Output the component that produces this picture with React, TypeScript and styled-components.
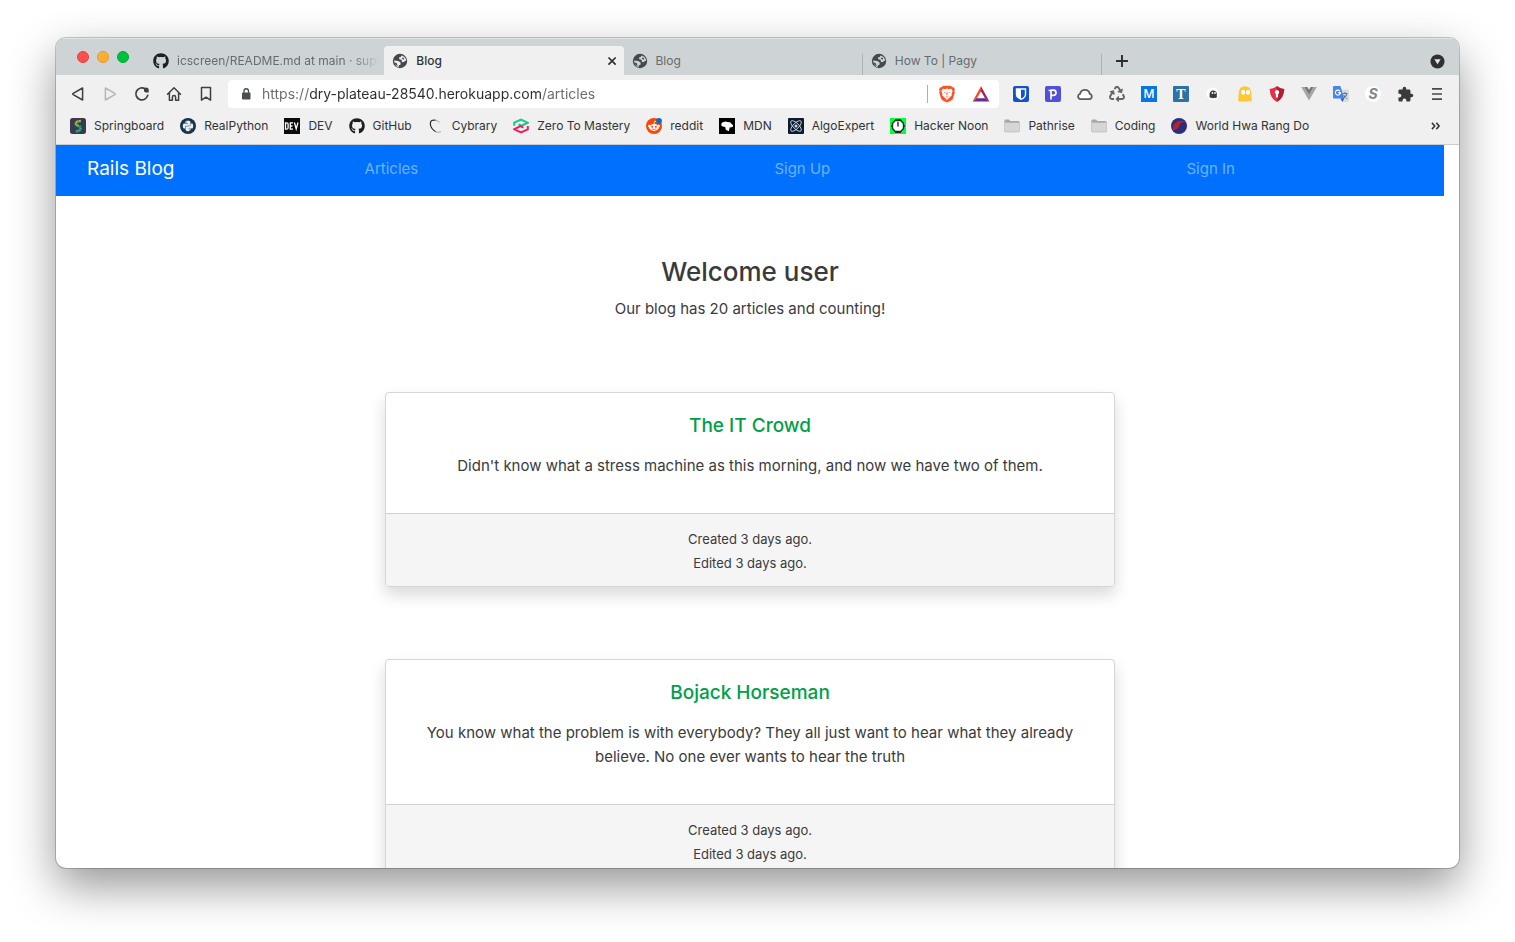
import React from 'react';
import styled, { createGlobalStyle, css } from 'styled-components';
import { FaGithub, FaPython, FaRecycle } from 'react-icons/fa';
import { MdExtension } from 'react-icons/md';

const GlobalStyle = createGlobalStyle`
  *, *::before, *::after { box-sizing: border-box; }
  body {
    margin: 0;
    background: #fff;
    color: #3a3a3c;
    font-family: Inter, Roboto, sans-serif;
    font-size: 15px;
    line-height: 24px;
  }
  button { border: 0; padding: 0; background: none; font: inherit; color: inherit; cursor: pointer; }
  a { color: inherit; text-decoration: none; }
  svg { display: block; flex: none; }
`;

const Desktop = styled.div`
  height: 100vh;
  padding: 38px 56px 74px;
  overflow: hidden;
`;

const BrowserWindow = styled.div`
  display: flex;
  flex-direction: column;
  height: 100%;
  overflow: hidden;
  background: #fff;
  border-radius: 10px;
  box-shadow: 0 0 0 1px rgba(0, 0, 0, 0.2), 0 18px 46px rgba(0, 0, 0, 0.42);
`;

/* ---- tab strip ---- */

const TabStrip = styled.div`
  display: flex;
  flex: none;
  height: 37px;
  padding: 8px 14px 0 21px;
  background: #ced4d6;
  box-shadow: inset 0 1px #e0e4e5;
`;

const TrafficLights = styled.div`
  display: flex;
  gap: 8px;
  width: 68px;
  padding-top: 5px;
`;

const Light = styled.button<{ $color: string; $edge: string }>`
  width: 12px;
  height: 12px;
  border: 1px solid ${(p) => p.$edge};
  border-radius: 50%;
  background: ${(p) => p.$color};
`;

const Tabs = styled.div`
  display: flex;
  flex: 0 1 957px;
  min-width: 0;
`;

const Tab = styled.div<{ $active?: boolean; $divider?: boolean }>`
  display: flex;
  align-items: center;
  flex: 1 1 0;
  min-width: 0;
  padding: 1px 4px 0 8px;
  border-right: 1px solid transparent;
  color: #666b6e;
  font-size: 12px;
  ${(p) => p.$active && css`
    border-radius: 4px 4px 0 0;
    background: #f0f0f0;
    color: #303335;
    font-weight: 500;
  `}
  ${(p) => p.$divider && css`
    border-image: linear-gradient(transparent 8px, #aeb4b6 8px) 1;
  `}
`;

const TabButton = styled.button<{ $fade?: boolean }>`
  display: flex;
  align-items: center;
  gap: 8px;
  flex: 1;
  min-width: 0;
  white-space: nowrap;
  ${(p) => p.$fade && css`
    mask-image: linear-gradient(to left, transparent 0, #000 28px);
  `}
`;

const StripButton = styled.button`
  display: flex;
  align-items: center;
  padding-top: 1px;
  &:last-child { margin-left: auto; }
`;

const NewTab = styled(StripButton)`
  padding-left: 13px;
`;

/* ---- toolbar ---- */

const Toolbar = styled.div`
  display: flex;
  flex: none;
  align-items: center;
  padding: 5px 6px 0;
  background: #f0f0f0;
`;

const IconButton = styled.button<{ $dim?: boolean }>`
  display: flex;
  align-items: center;
  justify-content: center;
  flex: none;
  width: 32px;
  height: 28px;
  color: ${(p) => (p.$dim ? '#b6b6b6' : '#3d3f41')};
`;

const AddressBar = styled.div`
  display: flex;
  align-items: center;
  flex: 1;
  min-width: 0;
  height: 28px;
  margin: 0 6px;
  padding: 0 9px 0 12px;
  border-radius: 4px;
  background: #fff;
`;

const AddressInput = styled.input`
  flex: 1;
  min-width: 0;
  margin-left: 10px;
  padding: 0;
  border: 0;
  outline: 0;
  color: #303335;
  font: 14px/24px Inter, Roboto, sans-serif;
  background: linear-gradient(to right, #66696b 47px, #2b2d2f 47px, #2b2d2f 280px, #66696b 280px);
  background-clip: text;
  -webkit-background-clip: text;
  -webkit-text-fill-color: transparent;
`;

const Shields = styled.div`
  display: flex;
  align-items: center;
  gap: 16px;
  padding-left: 10px;
  border-left: 1px solid #b0b0b0;
  button { display: flex; }
`;

/* ---- bookmarks ---- */

const Bookmarks = styled.nav`
  display: flex;
  flex: none;
  align-items: center;
  gap: 16px;
  height: 37px;
  padding: 0 18px 0 14px;
  border-bottom: 1px solid #c9cccd;
  background: #f0f0f0;
  color: #303335;
  font-size: 12px;
  white-space: nowrap;
`;

const Bookmark = styled.a`
  display: flex;
  align-items: center;
  gap: 8px;
`;

const MoreBookmarks = styled.button`
  margin-left: auto;
`;

/* ---- page ---- */

const Page = styled.div`
  flex: 1;
  min-height: 0;
  padding-right: 15px;
  overflow: hidden;
`;

const SiteNav = styled.nav`
  display: flex;
  height: 51px;
  padding: 3px 31px 7px;
  align-items: center;
  background: #0071ff;
`;

const Brand = styled.a`
  margin-right: 12px;
  color: #fff;
  font-size: 19px;
`;

const NavLinks = styled.div`
  display: flex;
  flex: 1;
`;

const NavLink = styled.a`
  flex: 1 1 auto;
  text-align: center;
  color: #6db1ff;
`;

const Hero = styled.header`
  padding: 59px 0 71px;
  text-align: center;
`;

const Welcome = styled.h1`
  margin: 0 0 8px;
  font-size: 26px;
  font-weight: 500;
  line-height: 34px;
`;

const Intro = styled.p`
  margin: 0;
`;

const ArticleList = styled.main`
  display: flex;
  flex-direction: column;
  gap: 72px;
  max-width: 730px;
  margin: 0 auto;
`;

const Card = styled.article`
  border: 1px solid #d6d6d6;
  border-radius: 4px;
  box-shadow: 0 8px 16px rgba(0, 0, 0, 0.15);
  background: #fff;
  text-align: center;
`;

const CardBody = styled.div`
  padding: 21px 20px 35px;
`;

const CardTitle = styled.h2`
  margin: 0 0 16px;
  color: #00a046;
  font-size: 19px;
  font-weight: 500;
  line-height: 24px;
`;

const CardText = styled.p`
  margin: 0;
`;

const CardFooter = styled.footer`
  padding: 13px 20px 11px;
  border-top: 1px solid #d0d0d0;
  border-radius: 0 0 3px 3px;
  background: #f5f5f5;
  font-size: 13px;
`;

/* ---- icons ---- */

const Glyph = ({ size = 16, children }: { size?: number; children: React.ReactNode }) => (
  <svg width={size} height={size} viewBox="0 0 16 16" fill="none" aria-hidden="true">{children}</svg>
);

const line = { stroke: 'currentColor', strokeWidth: 1.5, strokeLinejoin: 'round' as const, strokeLinecap: 'round' as const };

const GlobeIcon = ({ land }: { land: string }) => (
  <Glyph>
    <circle cx="8" cy="8" r="7.200" fill="#45494c" />
    <path d="M9.600 2.400q3.900.9 4.600 5.200l-1.900.9q-1.100 1.200-2.500.3L9.600 6.700 7.300 6.200 7 4.600l1.700-.6z" fill={land} />
    <path d="M2 7.600l4.300.3 2.300 1.700v1.900l-1.900 1.100-.3 1.800Q3 13.500 2 7.600z" fill={land} />
    <path d="M2.300 9.200l2.500 1 .9 2.700Q3 12.300 2.300 9.200zM10.600 4.200l1.700 1.400-.8 1.200-1.500-1z" fill="#45494c" />
  </Glyph>
);

const BackIcon = () => <Glyph><path d="M12.600 2v12L3.200 8.600q-.8-.6 0-1.200z" {...line} /></Glyph>;
const ForwardIcon = () => <Glyph><path d="M3.400 2v12l9.400-5.400q.8-.6 0-1.200z" {...line} /></Glyph>;
const ReloadIcon = () => (
  <Glyph>
    <path d="M13.700 9.400A6 6 0 1 1 11.400 3" {...line} strokeWidth={1.7} />
    <path d="M10.200 5.200a2.400 2.400 0 0 1 2-3.600q2.300.1 2.500 1.800v3.200h-3.200z" fill="currentColor" />
  </Glyph>
);
const HomeIcon = () => (
  <Glyph><path d="M1.500 8.200 8 1.800l6.500 6.400M3.400 6.800v7.400h3v-3a1.600 1.600 0 0 1 3.200 0v3h3V6.800" {...line} /></Glyph>
);
const BookmarkIcon = () => <Glyph><path d="M3.500 1.600h9v12.600L8 11.200l-4.500 3z" {...line} /></Glyph>;

const LockIcon = () => (
  <svg width="12" height="14" viewBox="0 0 12 14" fill="none" aria-hidden="true">
    <rect x="2" y="5.500" width="8.500" height="7" rx="1" fill="#4a4d50" />
    <path d="M4 6V4a2.250 2.250 0 0 1 4.500 0v2" stroke="#4a4d50" strokeWidth="1.300" />
  </svg>
);

const BraveIcon = () => (
  <Glyph size={18}>
    <path d="M4.700.6h6.600l1.500 1.500 1.100-.2 1.200 1.900-.6 1.500.4 1.600-1.800 5.700Q11.600 14 8 15.600 4.400 14 2.900 12.600L1.100 6.900l.4-1.600-.6-1.500 1.200-1.900 1.100.2z" fill="#fb542b" />
    <path d="m4.200 3.300 2.300.4L8 3.100l1.500.6 2.300-.4 1.200 2-1 2.700.4 1.200-2 1.700L8 13.400l-2.400-2.500-2-1.700L4 8 3 5.300z" fill="#fff" />
    <path d="m4.800 6 1.800.4-.4.800zM11.200 6l-1.800.4.400.800zM7.500 6.500h1L8.400 9h-.8zM6.400 9.800l1.600.7 1.600-.7L8 11.400z" fill="#fb542b" />
  </Glyph>
);

const BatIcon = () => (
  <Glyph size={18}>
    <path d="M8 1v4.600L4.400 11.800.5 14.600z" fill="#ff4724" />
    <path d="M8 1v4.600l3.600 6.200 3.900 2.800z" fill="#9e1f63" />
    <path d="M.5 14.600l3.900-2.800h7.200l3.900 2.800z" fill="#662d91" />
  </Glyph>
);

const MarkdownIcon = () => (
  <Glyph>
    <rect width="16" height="16" fill="#0b74e5" />
    <text x="8" y="12" textAnchor="middle" fontFamily="Inter" fontSize="12" fontWeight="500" fill="#fff">M</text>
  </Glyph>
);

const SerifTIcon = () => (
  <Glyph>
    <rect width="16" height="16" rx="1" fill="#2a72a8" />
    <text x="8" y="13" textAnchor="middle" fontFamily="Liberation Serif" fontSize="14" fontWeight="700" fill="#fff">T</text>
  </Glyph>
);

const BitwardenIcon = () => (
  <Glyph>
    <rect width="16" height="16" rx="2" fill="#1252d0" />
    <path d="M2.800 2.200h10.400v6.300q0 3.300-5.200 5.600-5.200-2.300-5.200-5.600z" fill="#fff" />
    <path d="M8 3.700h3.800v4.700Q11.800 10.800 8 12.500z" fill="#1252d0" />
  </Glyph>
);

const PIcon = () => (
  <Glyph>
    <rect width="16" height="16" rx="2" fill="#5050dc" />
    <path d="M6 13.500V3.400M3.600 4.500H6M6 4.200h2.400a2.600 2.600 0 0 1 0 5.200H6.500" stroke="#fff" strokeWidth="1.700" />
  </Glyph>
);

const CloudIcon = () => (
  <Glyph>
    <path d="M3.600 13.100a2.700 2.700 0 0 1-.5-5.300A4.900 4.900 0 0 1 12.700 7.800a2.700 2.700 0 0 1-.3 5.300z" fill="#fff" stroke="#5d5d5d" strokeWidth="1.800" />
  </Glyph>
);

const GhostDarkIcon = () => (
  <Glyph>
    <circle cx="8" cy="8" r="6.500" fill="#fff" />
    <path d="M4.600 7.600a3.700 3.700 0 0 1 7.200-.6v4.400l-1.200.7-1.400-.4-1.300.6-1.500-.5-1.800-.2z" fill="#3c3c3c" />
    <circle cx="7.400" cy="7" r=".9" fill="#fff" /><circle cx="10" cy="7" r=".9" fill="#fff" />
  </Glyph>
);

const GhosteryIcon = () => (
  <Glyph>
    <path d="M1.800 6.600Q2.300.2 8 .2t6.200 6.400l.6 7.800q-1.300 1.500-2.900.4-1.900 1.400-3.800.2-2 1.500-3.900.2-1.800 1.100-3.100-.6z" fill="#ffc736" />
    <ellipse cx="6.200" cy="6.300" rx="2" ry="2.500" fill="#fff" /><ellipse cx="11" cy="6.300" rx="2" ry="2.500" fill="#fff" />
  </Glyph>
);

const RedShieldIcon = () => (
  <Glyph>
    <path d="M8 0v16Q1 12.300.6 3 5 2.600 8 0z" fill="#e5304a" />
    <path d="M8 0v16q7-3.700 7.400-13Q11 2.600 8 0z" fill="#b01f30" />
    <path d="M8 4a2.200 2.200 0 0 1 1.100 4.100v3.500H6.900V8.100A2.200 2.200 0 0 1 8 4z" fill="#fff" />
  </Glyph>
);

const VueIcon = () => (
  <Glyph>
    <path d="M.2 1h3.200L8 9l4.600-8h3.200L8 14.600z" fill="#a6a6a6" />
    <path d="M3.400 1h3L8 3.800 9.600 1h3L8 9z" fill="#777" />
  </Glyph>
);

const TranslateIcon = () => (
  <Glyph>
    <path d="M6 3.500h9q1 0 1 1V15q0 1-1 1H9z" fill="#d9dcdf" />
    <path d="M9.500 7.500h5M12 6v1.500m2 0q-1 3.500-4 5M10.500 9q1.500 2.600 3.800 3.500" stroke="#607988" strokeWidth="1.100" />
    <path d="M1 0h6.400l3.800 12.600H1q-1 0-1-1V1Q0 0 1 0z" fill="#4285f4" />
    <path d="M7.500 12.600h3.700L9.400 16z" fill="#3848b8" />
    <path d="M6.900 5.100A2.500 2.500 0 1 0 7.400 6.600H5.200" stroke="#fff" strokeWidth="1.200" />
  </Glyph>
);

const StylusIcon = () => (
  <Glyph>
    <circle cx="8" cy="8" r="8" fill="#fff" />
    <text x="8" y="13" textAnchor="middle" fontFamily="Inter" fontStyle="italic" fontSize="14" fontWeight="700" fill="#858585">S</text>
  </Glyph>
);

const MenuIcon = () => <Glyph><path d="M3 2.900h10M3 8h10M3 13.100h10" stroke="#4a4a4a" strokeWidth="1.600" /></Glyph>;

const SpringboardIcon = () => (
  <Glyph>
    <rect width="16" height="16" rx="2.500" fill="#3b3a4c" />
    <path d="M10.800 3Q5.600 3.200 5.900 6q.6 1.600 3 2" stroke="#a6c23a" strokeWidth="2.400" strokeDasharray="1.500 .4" />
    <path d="M7.400 7.800q3.400.3 3 3-.5 2.300-4.600 2.500" stroke="#25b784" strokeWidth="2.600" strokeDasharray="1.500 .4" />
  </Glyph>
);

const RealPythonIcon = () => (
  <Glyph>
    <circle cx="8" cy="8" r="8" fill="#17344a" />
    <FaPython x="2" y="2" size={12} color="#e9eef2" />
  </Glyph>
);

const DevIcon = () => (
  <Glyph>
    <rect width="16" height="16" fill="#0a0a0a" />
    <path d="M1.500 4.800v6.400h1q1.600 0 1.600-1.500V6.300q0-1.500-1.600-1.500zM9 4.800H6.300v6.400H9M6.300 8h2.200M10.400 4.500l1.800 6.400 1.800-6.400" stroke="#fff" strokeWidth="1.300" />
  </Glyph>
);

const CybraryIcon = () => (
  <Glyph>
    <path d="M8 2.400Q2.500 1.200 2.300 5.600q.2 5.200 5.400 8.200" stroke="#2a2a2a" strokeWidth="1.200" />
    <path d="M6.600 2.200q3.200.2 5 2.200M7.700 13.800q2.700 1.200 5.200-.2" stroke="#a0a0a0" strokeWidth="1" />
  </Glyph>
);

const ZtmIcon = () => (
  <Glyph>
    <path d="M1.200 7.800V4.700L8 1.500l6.800 3.200L8.600 7.600 5.500 6.300" stroke="#17c88a" strokeWidth="2" />
    <path d="M14.800 8v3.300L8 14.500l-6.800-3.200L7.400 8.200l3.100 1.400" stroke="#ec1e5e" strokeWidth="2" />
  </Glyph>
);

const RedditIcon = () => (
  <Glyph>
    <circle cx="8" cy="8" r="8" fill="#ff4500" />
    <ellipse cx="8" cy="9.400" rx="4.900" ry="3.500" fill="#fff" />
    <circle cx="3.300" cy="8" r="1.300" fill="#fff" /><circle cx="12.700" cy="8" r="1.300" fill="#fff" />
    <path d="m8 6 .7-2.800 2.300.5" stroke="#fff" strokeWidth=".8" />
    <circle cx="6.100" cy="8.700" r="1" fill="#ff4500" /><circle cx="9.900" cy="8.700" r="1" fill="#ff4500" />
    <path d="M5.900 10.900q2.100 1.300 4.200 0" stroke="#ff4500" strokeWidth=".8" />
    <circle cx="13" cy="2.900" r="2.900" fill="#0a6ac4" />
  </Glyph>
);

const MdnIcon = () => (
  <Glyph>
    <rect width="16" height="16" fill="#000" />
    <path d="M2.200 7.200q0-3 2.600-3.200 2-.8 3.400 0l2.800.3 3.200 3.200-.6 1.600-2.900.3-.9 3.900-3-1.600-.6-2.700L3.600 8.600z" fill="#fff" />
  </Glyph>
);

const AlgoIcon = () => (
  <Glyph>
    <rect width="16" height="16" rx="1" fill="#0b1c30" />
    <ellipse cx="8" cy="8" rx="7" ry="2.800" transform="rotate(45 8 8)" stroke="#cfd8e2" strokeWidth=".9" />
    <ellipse cx="8" cy="8" rx="7" ry="2.800" transform="rotate(-45 8 8)" stroke="#cfd8e2" strokeWidth=".9" />
    <circle cx="8" cy="8" r="1.500" fill="#cfd8e2" />
  </Glyph>
);

const HackerNoonIcon = () => (
  <Glyph>
    <rect width="16" height="16" fill="#00ff41" />
    <path d="M5.200 2.500h5.600l2.700 3v5l-2.700 3H5.200l-2.700-3v-5z" fill="#fff" stroke="#1c2c20" strokeWidth="1.400" />
    <path d="M8 4v4.500M2.500 8H1M13.500 8H15" stroke="#1c2c20" strokeWidth="1.400" />
    <path d="M5 2h6M5 14h6" stroke="#1c2c20" strokeWidth="2" />
  </Glyph>
);

const FolderIcon = () => (
  <Glyph>
    <path d="M.4 2.500q0-1 1-1h3.800l1.200 1.400h8.200q1 0 1 1v9.400q0 1-1 1H1.400q-1 0-1-1z" fill="#a9a9a9" />
    <path d="M.8 4.800h14.400v8.200q0 .8-.8.800H1.600q-.8 0-.8-.8z" fill="#d6d6d6" />
  </Glyph>
);

const HwaRangIcon = () => (
  <Glyph>
    <circle cx="8" cy="8" r="8" fill="#2a2f7c" />
    <path d="M2.300 13.600A8 8 0 0 1 15.400 5Q13.600 3.600 11 4.500 8.400 5.600 8.200 8 7.600 11 4.800 11.300 2.600 11.400 2.300 13.600z" fill="#b0242e" />
  </Glyph>
);

const CloseIcon = () => <Glyph size={14}><path d="m4 4 8.200 8.200M12.200 4 4 12.200" stroke="#303030" strokeWidth="2" /></Glyph>;
const PlusIcon = () => <Glyph size={14}><path d="M8 1.200v13.600M1.200 8h13.600" stroke="#2c2c2c" strokeWidth="2.200" /></Glyph>;
const TabSearchIcon = () => (
  <Glyph size={15}><circle cx="8" cy="8" r="7.500" fill="#303030" /><path d="M4.600 5.600h6.800L8 11z" fill="#e3e6e7" /></Glyph>
);
const ChevronsIcon = () => (
  <Glyph size={10}><path d="m1.500 3 4.500 5-4.500 5M8.500 3l4.500 5-4.500 5" stroke="#303335" strokeWidth="2.400" /></Glyph>
);

/* ---- data ---- */

const navControls: [string, React.ReactNode, boolean?][] = [
  ['Back', <BackIcon />],
  ['Forward', <ForwardIcon />, true],
  ['Reload', <ReloadIcon />],
  ['Home', <HomeIcon />],
  ['Bookmark this page', <BookmarkIcon />],
];

const extensions: [string, React.ReactNode][] = [
  ['Bitwarden', <BitwardenIcon />],
  ['Pocket tools', <PIcon />],
  ['Cloud', <CloudIcon />],
  ['Recycle', <FaRecycle size={16} color="#666" />],
  ['Markdown', <MarkdownIcon />],
  ['Text', <SerifTIcon />],
  ['Privacy', <GhostDarkIcon />],
  ['Ghostery', <GhosteryIcon />],
  ['Password shield', <RedShieldIcon />],
  ['Vue devtools', <VueIcon />],
  ['Translate', <TranslateIcon />],
  ['Stylus', <StylusIcon />],
  ['Extensions', <MdExtension size={17} color="#3a3a3a" />],
  ['Menu', <MenuIcon />],
];

const bookmarks: [string, React.ReactNode][] = [
  ['Springboard', <SpringboardIcon />],
  ['RealPython', <RealPythonIcon />],
  ['DEV', <DevIcon />],
  ['GitHub', <FaGithub size={16} color="#1c2024" />],
  ['Cybrary', <CybraryIcon />],
  ['Zero To Mastery', <ZtmIcon />],
  ['reddit', <RedditIcon />],
  ['MDN', <MdnIcon />],
  ['AlgoExpert', <AlgoIcon />],
  ['Hacker Noon', <HackerNoonIcon />],
  ['Pathrise', <FolderIcon />],
  ['Coding', <FolderIcon />],
  ['World Hwa Rang Do', <HwaRangIcon />],
];

const articles = [
  { title: 'The IT Crowd', text: "Didn't know what a stress machine as this morning, and now we have two of them." },
  {
    title: 'Bojack Horseman',
    text: 'You know what the problem is with everybody? They all just want to hear what they already believe. No one ever wants to hear the truth',
  },
];

export default function App() {
  return (
    <>
      <GlobalStyle />
      <Desktop>
        <BrowserWindow>
          <TabStrip>
            <TrafficLights>
              <Light aria-label="Close window" $color="#ff4f4d" $edge="#e2403e" />
              <Light aria-label="Minimize window" $color="#ffae33" $edge="#e3982a" />
              <Light aria-label="Zoom window" $color="#00c13a" $edge="#00a832" />
            </TrafficLights>
            <Tabs>
              <Tab>
                <TabButton $fade>
                  <FaGithub size={16} color="#1c2024" />
                  icscreen/README.md at main · supe
                </TabButton>
              </Tab>
              <Tab $active>
                <TabButton><GlobeIcon land="#f0f0f0" />Blog</TabButton>
                <button aria-label="Close tab"><CloseIcon /></button>
              </Tab>
              <Tab $divider>
                <TabButton><GlobeIcon land="#ced4d6" />Blog</TabButton>
              </Tab>
              <Tab $divider>
                <TabButton><GlobeIcon land="#ced4d6" />How To | Pagy</TabButton>
              </Tab>
            </Tabs>
            <NewTab aria-label="New tab"><PlusIcon /></NewTab>
            <StripButton aria-label="Search tabs"><TabSearchIcon /></StripButton>
          </TabStrip>

          <Toolbar>
            {navControls.map(([label, icon, dim]) => (
              <IconButton key={label} aria-label={label} $dim={dim}>{icon}</IconButton>
            ))}
            <AddressBar>
              <LockIcon />
              <AddressInput aria-label="Address" defaultValue="https://dry-plateau-28540.herokuapp.com/articles" />
              <Shields>
                <button aria-label="Brave shields"><BraveIcon /></button>
                <button aria-label="Brave rewards"><BatIcon /></button>
              </Shields>
            </AddressBar>
            {extensions.map(([label, icon]) => (
              <IconButton key={label} aria-label={label}>{icon}</IconButton>
            ))}
          </Toolbar>

          <Bookmarks aria-label="Bookmarks">
            {bookmarks.map(([label, icon]) => (
              <Bookmark key={label} href="#">{icon}{label}</Bookmark>
            ))}
            <MoreBookmarks aria-label="More bookmarks"><ChevronsIcon /></MoreBookmarks>
          </Bookmarks>

          <Page>
            <SiteNav aria-label="Site">
              <Brand href="#">Rails Blog</Brand>
              <NavLinks>
                <NavLink href="#">Articles</NavLink>
                <NavLink href="#">Sign Up</NavLink>
                <NavLink href="#">Sign In</NavLink>
              </NavLinks>
            </SiteNav>
            <Hero>
              <Welcome>Welcome user</Welcome>
              <Intro>Our blog has 20 articles and counting!</Intro>
            </Hero>
            <ArticleList>
              {articles.map((a) => (
                <Card key={a.title}>
                  <CardBody>
                    <CardTitle><a href="#">{a.title}</a></CardTitle>
                    <CardText>{a.text}</CardText>
                  </CardBody>
                  <CardFooter>
                    <div>Created 3 days ago.</div>
                    <div>Edited 3 days ago.</div>
                  </CardFooter>
                </Card>
              ))}
            </ArticleList>
          </Page>
        </BrowserWindow>
      </Desktop>
    </>
  );
}
